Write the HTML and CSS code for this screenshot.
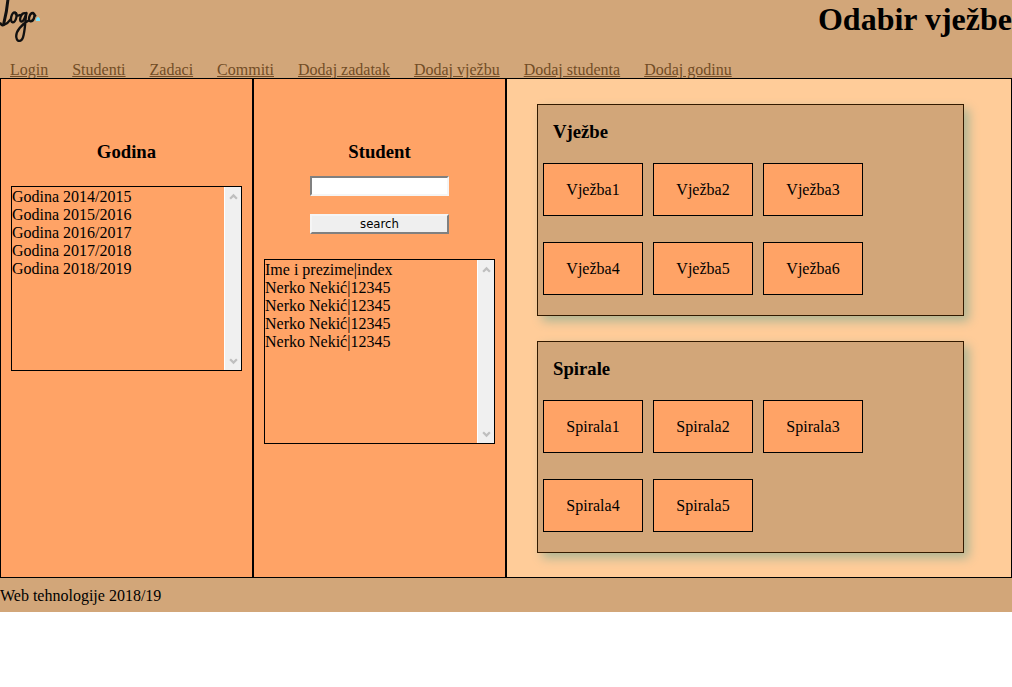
FILE: index.html
```html
<!DOCTYPE html>
<html lang="bs">
<head>
<meta charset="utf-8">
<title>Odabir vježbe</title>
<link rel="stylesheet" href="styles.css">
</head>
<body>
<header class="header">
  <div class="banner">
    <svg class="logo" viewBox="0 0 120 126" role="img" aria-label="Logo">
      <g fill="none" stroke="#111" stroke-linecap="round" stroke-linejoin="round">
        <path stroke-width="9" d="M24 -4C22 22 17 48 11 72"/>
        <path stroke-width="7" d="M2 70Q5 79 13 74Q23 71 31 59"/>
        <path stroke-width="7" d="M45 37C34 36 28 66 38 67C48 67 55 38 45 37M47 42Q51 50 60 45"/>
        <path stroke-width="7" d="M76 40C64 34 55 64 64 65C71 65 77 48 79 39"/>
        <path stroke-width="7" d="M79 40C76 58 76 82 71 104C67 126 52 129 49 112C46 94 66 72 87 61"/>
        <path stroke-width="7" d="M99 39C88 38 83 63 91 64C102 65 108 42 99 39L106 47"/>
      </g>
      <path fill="#7fe4fb" d="M111 52h6v3h3v8h-12v-8h3z"/>
    </svg>
    <h1 class="title">Odabir vježbe</h1>
  </div>
  <nav class="nav">
    <a href="#">Login</a>
    <a href="#">Studenti</a>
    <a href="#">Zadaci</a>
    <a href="#">Commiti</a>
    <a href="#">Dodaj zadatak</a>
    <a href="#">Dodaj vježbu</a>
    <a href="#">Dodaj studenta</a>
    <a href="#">Dodaj godinu</a>
  </nav>
</header>
<main class="main">
  <section class="column">
    <h3 class="heading" id="godina">Godina</h3>
    <div class="listbox listbox-years">
      <select class="list" size="10" aria-labelledby="godina">
        <option>Godina 2014/2015</option>
        <option>Godina 2015/2016</option>
        <option>Godina 2016/2017</option>
        <option>Godina 2017/2018</option>
        <option>Godina 2018/2019</option>
      </select>
      <div class="scrollbar" aria-hidden="true">
        <svg class="arrow" viewBox="0 0 8 6"><path d="M1 5L4 2L7 5"/></svg>
        <svg class="arrow" viewBox="0 0 8 6"><path d="M1 1L4 4L7 1"/></svg>
      </div>
    </div>
  </section>
  <section class="column">
    <h3 class="heading" id="student">Student</h3>
    <form class="search">
      <input class="field" type="text" aria-labelledby="student">
      <button class="submit" type="button">search</button>
    </form>
    <div class="listbox">
      <select class="list" size="10" aria-labelledby="student">
        <option>Ime i prezime|index</option>
        <option>Nerko Nekić|12345</option>
        <option>Nerko Nekić|12345</option>
        <option>Nerko Nekić|12345</option>
        <option>Nerko Nekić|12345</option>
      </select>
      <div class="scrollbar" aria-hidden="true">
        <svg class="arrow" viewBox="0 0 8 6"><path d="M1 5L4 2L7 5"/></svg>
        <svg class="arrow" viewBox="0 0 8 6"><path d="M1 1L4 4L7 1"/></svg>
      </div>
    </div>
  </section>
  <section class="content">
    <div class="card">
      <h3 class="card-title">Vježbe</h3>
      <div class="tiles">
        <button class="tile" type="button">Vježba1</button>
        <button class="tile" type="button">Vježba2</button>
        <button class="tile" type="button">Vježba3</button>
        <button class="tile" type="button">Vježba4</button>
        <button class="tile" type="button">Vježba5</button>
        <button class="tile" type="button">Vježba6</button>
      </div>
    </div>
    <div class="card">
      <h3 class="card-title">Spirale</h3>
      <div class="tiles">
        <button class="tile" type="button">Spirala1</button>
        <button class="tile" type="button">Spirala2</button>
        <button class="tile" type="button">Spirala3</button>
        <button class="tile" type="button">Spirala4</button>
        <button class="tile" type="button">Spirala5</button>
      </div>
    </div>
  </section>
</main>
<footer class="footer">Web tehnologije 2018/19</footer>
</body>
</html>
```

FILE: styles.css
```css
* {
  box-sizing: border-box;
}

body {
  margin: 0;
  background: #fff;
  color: #000;
  font: 16px/18px "Liberation Serif", "Times New Roman", serif;
}

.header,
.footer {
  background: #d2a679;
}

.banner {
  display: flex;
  justify-content: space-between;
  align-items: flex-start;
  min-height: 61px;
}

.logo {
  width: 40px;
  height: 42px;
}

.title {
  margin: 0;
  font-size: 32px;
  line-height: 38px;
}

.nav {
  display: flex;
  flex-wrap: wrap;
  column-gap: 24px;
  padding: 0 10px;
  line-height: 17px;
}

.nav a {
  color: #734d26;
}

.main {
  display: grid;
  grid-template-columns: 1fr 1fr 2fr;
}

.column {
  padding: 62px 10px 24px;
  border: 1px solid #000;
  background: #ffa366;
}

.heading {
  margin: 0;
  line-height: 21px;
  text-align: center;
}

.search {
  display: flex;
  flex-direction: column;
  align-items: center;
  gap: 18px;
  margin: 14px 0 25px;
}

.field,
.submit {
  width: 139px;
  height: 20px;
  padding: 0;
  font: 13px/16px "DejaVu Sans Condensed", Tahoma, sans-serif;
}

.field {
  border: 2px solid;
  border-color: #808080 #f5f5f5 #f5f5f5 #808080;
  background: #fff;
}

.submit {
  border: 2px solid;
  border-color: #f5f5f5 #808080 #808080 #f5f5f5;
  background: #efefef;
  color: #000;
}

.listbox {
  display: flex;
  height: 185px;
  border: 1px solid #000;
}

.listbox-years {
  margin-top: 24px;
}

.list {
  flex: 1;
  min-width: 0;
  padding: 1px 0;
  border: 0;
  border-radius: 0;
  outline: 0;
  background: transparent;
  color: #000;
  font: inherit;
  scrollbar-width: none;
}

.list option {
  min-height: 18px;
  padding: 0;
  line-height: 18px;
}

.scrollbar {
  display: flex;
  flex-direction: column;
  justify-content: space-between;
  align-items: center;
  width: 17px;
  padding: 6px 0 5px;
  border-left: 1px solid #fff;
  background: #f0f0f0;
}

.arrow {
  width: 9px;
  height: 7px;
  fill: none;
  stroke: #bfbfbf;
  stroke-width: 2;
}

.content {
  display: flex;
  flex-direction: column;
  gap: 25px;
  padding: 25px 47px 24px 30px;
  border: 1px solid #000;
  background: #ffcc99;
}

.card {
  padding: 16px 5px 20px;
  border: 1px solid #331a00;
  background: #d2a679;
  box-shadow: 5px 5px 10px #acb595;
}

.card-title {
  margin: 0 10px 21px;
  line-height: 21px;
}

.tiles {
  display: flex;
  flex-wrap: wrap;
  gap: 26px 10px;
  padding-right: 80px;
}

.tile {
  width: 100px;
  height: 53px;
  padding: 0;
  border: 1px solid #000;
  background: #ffa366;
  color: #000;
  font: inherit;
}

.footer {
  padding: 9px 0 7px;
}
```
